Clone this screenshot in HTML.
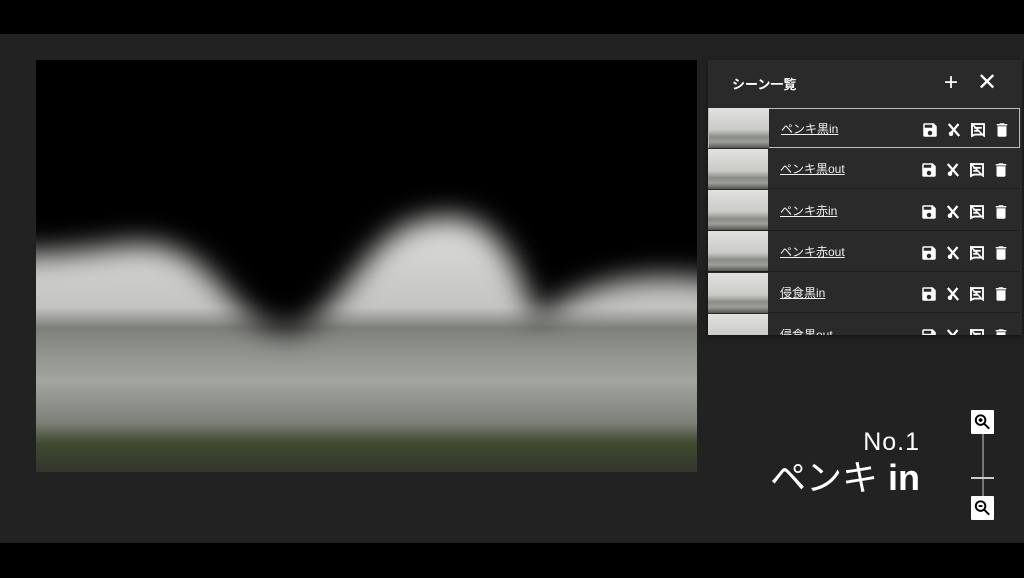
<!DOCTYPE html>
<html><head><meta charset="utf-8"><style>
*{margin:0;padding:0;box-sizing:border-box}
body{width:1024px;height:578px;background:#000;position:relative;overflow:hidden;font-family:"Liberation Sans","Noto Sans CJK JP",sans-serif;color:#fff}
.main{position:absolute;left:0;top:34px;width:1024px;height:509px;background:#222}
.pic{position:absolute;left:36px;top:60px;width:661px;height:412px;overflow:hidden}
.panel{position:absolute;left:708px;top:60px;width:314px;height:275px;background:#2a2a2a;overflow:hidden;box-shadow:0 2px 6px rgba(0,0,0,.5)}
.hd{height:46px;display:flex;align-items:center;padding-left:24px;font-size:13px;font-weight:bold}
.hd .ic{position:absolute;top:12px;font-size:24px;font-weight:normal;line-height:22px}
.row{position:absolute;left:0;width:312px;height:40px;border-bottom:1px solid #1e1e1e;display:flex;align-items:center}
.row.sel{border:1px solid #bbb}
.th{width:60px;height:40px;background:linear-gradient(180deg,#e2e2e0 0%,#c9cac6 55%,#8a8c87 72%,#9c9e99 85%,#55574f 100%)}
.row span{margin-left:12px;font-size:12px;text-decoration:underline;color:#eee;width:140px}
.icons{position:absolute;left:212px;top:12px;display:flex;gap:6px}
.icons svg{width:18px;height:18px}
.lbl{position:absolute;right:104px;text-align:right}
.zb{position:absolute;left:971px;width:23px;height:24px;background:#fff;border-radius:1px}
</style></head><body>
<div class="main"></div>
<svg class="pic" viewBox="0 0 661 412">
<defs>
<linearGradient id="g" x1="0" y1="0" x2="0" y2="1">
<stop offset="0.4" stop-color="#dcdcda"/><stop offset="0.6" stop-color="#c4c5c2"/>
<stop offset="0.65" stop-color="#7d7f7a"/><stop offset="0.7" stop-color="#8c8f8a"/>
<stop offset="0.78" stop-color="#a2a5a0"/><stop offset="0.88" stop-color="#7d8078"/><stop offset="0.93" stop-color="#3e4a2e"/><stop offset="1" stop-color="#34352e"/>
</linearGradient>
<filter id="b" x="-20%" y="-20%" width="140%" height="140%"><feGaussianBlur stdDeviation="14"/></filter>
</defs>
<rect width="661" height="412" fill="url(#g)"/>
<path d="M-60 -60H720V230C640 210 560 210 500 260C470 160 430 150 390 160C320 170 290 300 230 265C190 250 170 175 90 185C50 190 20 195 -60 195Z" fill="#000" filter="url(#b)"/>
</svg>
<div class="panel">
<div class="hd">シーン一覧<span class="ic" style="left:236px">+</span><span class="ic" style="left:269px">✕</span></div>
</div>
<script>
var n=["ペンキ黒in","ペンキ黒out","ペンキ赤in","ペンキ赤out","侵食黒in","侵食黒out"];
var ic='<svg viewBox="0 0 24 24"><path fill="#fff" d="M17 3H5a2 2 0 0 0-2 2v14a2 2 0 0 0 2 2h14a2 2 0 0 0 2-2V7l-4-4zm-5 16a3 3 0 1 1 0-6 3 3 0 0 1 0 6zm3-10H5V5h10v4z"/></svg><svg viewBox="0 0 24 24"><path stroke="#fff" stroke-width="3" d="M5 4l14 16M18 4L9 15"/><circle cx="8" cy="17" r="3" fill="#fff"/></svg><svg viewBox="0 0 24 24"><path fill="none" stroke="#fff" stroke-width="2.5" d="M4 20V4h16v14H8zM7 9h10M7 13h7"/><path stroke="#fff" stroke-width="2" d="M3 3l18 18"/></svg><svg viewBox="0 0 24 24"><path fill="#fff" d="M6 19a2 2 0 0 0 2 2h8a2 2 0 0 0 2-2V7H6v12zM19 4h-3.5l-1-1h-5l-1 1H5v2h14V4z"/></svg>';
var h='';n.forEach(function(t,i){h+='<div class="row'+(i==0?' sel':'')+'" style="top:'+(48+i*41.3)+'px"><div class="th"></div><span>'+t+'</span><div class="icons">'+ic+'</div></div>';});
document.querySelector('.panel').insertAdjacentHTML('beforeend',h);
</script>
<div class="lbl" style="top:428px;font-size:25px;letter-spacing:1px">No.1</div>
<div class="lbl" style="top:454px;font-size:36px;font-weight:bold;line-height:48px"><span style="font-weight:normal">ペンキ</span> in</div>
<div style="position:absolute;left:982px;top:434px;width:2px;height:64px;background:#777"></div>
<div style="position:absolute;left:971px;top:477px;width:23px;height:2px;background:#ccc"></div>
<div class="zb" style="top:410px"><svg viewBox="0 0 24 24" width="23" height="24"><circle cx="10" cy="10" r="5" fill="none" stroke="#000" stroke-width="2"/><path d="M14 14l5 5M8 10h4M10 8v4" stroke="#000" stroke-width="2"/></svg></div>
<div class="zb" style="top:496px"><svg viewBox="0 0 24 24" width="23" height="24"><circle cx="10" cy="10" r="5" fill="none" stroke="#000" stroke-width="2"/><path d="M14 14l5 5M8 10h4" stroke="#000" stroke-width="2"/></svg></div>
</body></html>
